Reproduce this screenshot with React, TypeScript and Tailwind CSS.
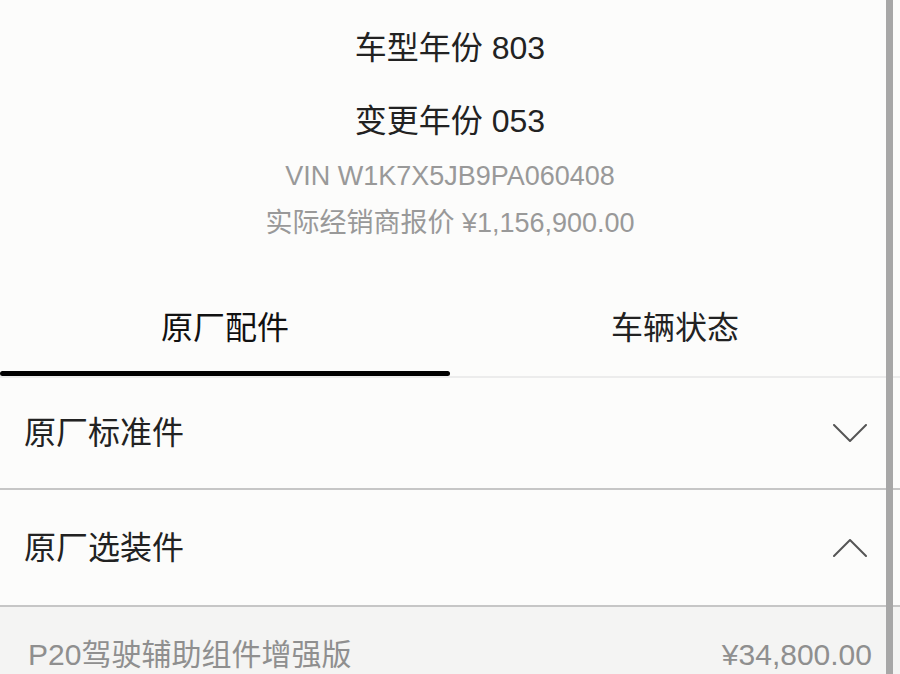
import React from 'react';

const font = { fontFamily: '"Liberation Sans", "Noto Sans CJK SC", sans-serif' };

function Chevron({ up }: { up?: boolean }) {
    return (
        <svg width="34" height="18" viewBox="0 0 34 18" fill="none">
            <path
                d={up ? 'M1 17 L17 1 L33 17' : 'M1 1 L17 17 L33 1'}
                stroke="#555"
                strokeWidth="2"
                strokeLinecap="round"
                strokeLinejoin="round"
            />
        </svg>
    );
}

export default function App() {
    const opciones = [{ nombre: 'P20驾驶辅助组件增强版', precio: '¥34,800.00' }];

    return (
        <div className="relative w-[900px] h-[674px] overflow-hidden bg-[#fcfcfb] text-[#222]" style={font}>
            {/* Cabecera del vehiculo */}
            <div className="flex flex-col items-center pt-[24px]">
                <div className="text-[32px] leading-[48px]">车型年份 803</div>
                <div className="text-[32px] leading-[48px] mt-[25px]">变更年份 053</div>
                <div className="text-[27px] leading-[40px] mt-[11px] text-[#999]">VIN W1K7X5JB9PA060408</div>
                <div className="text-[27px] leading-[40px] mt-[7px] text-[#999]">实际经销商报价 ¥1,156,900.00</div>
            </div>

            {/* Tabs */}
            <div className="flex mt-[41px] border-b-2 border-[#ececec]">
                <div className="flex-1 flex flex-col">
                    <div className="h-[87px] flex items-center justify-center text-[32px] text-[#111]">原厂配件</div>
                    <div className="h-[5px] bg-black rounded-full" />
                </div>
                <div className="flex-1 flex flex-col">
                    <div className="h-[87px] flex items-center justify-center text-[32px] text-[#222]">车辆状态</div>
                    <div className="h-[5px]" />
                </div>
            </div>

            {/* Secciones */}
            <div className="h-[112px] flex items-center justify-between pl-[24px] pr-[33px] border-b-2 border-[#c6c6c6]">
                <span className="text-[32px]">原厂标准件</span>
                <Chevron />
            </div>
            <div className="h-[117px] flex items-center justify-between pl-[24px] pr-[33px] border-b-2 border-[#c6c6c6]">
                <span className="text-[32px]">原厂选装件</span>
                <Chevron up />
            </div>
            <ul className="bg-[#f4f4f3]">
                {opciones.map((o) => (
                    <li key={o.nombre} className="h-[94px] flex items-center justify-between pl-[28px] pr-[28px] text-[30px] text-[#8f8f8f]">
                        <span>{o.nombre}</span>
                        <span>{o.precio}</span>
                    </li>
                ))}
            </ul>

            {/* Barra de scroll */}
            <div className="absolute top-0 bottom-0 left-[886px] w-[7px] bg-[#a7a7a7]" />
        </div>
    );
}
